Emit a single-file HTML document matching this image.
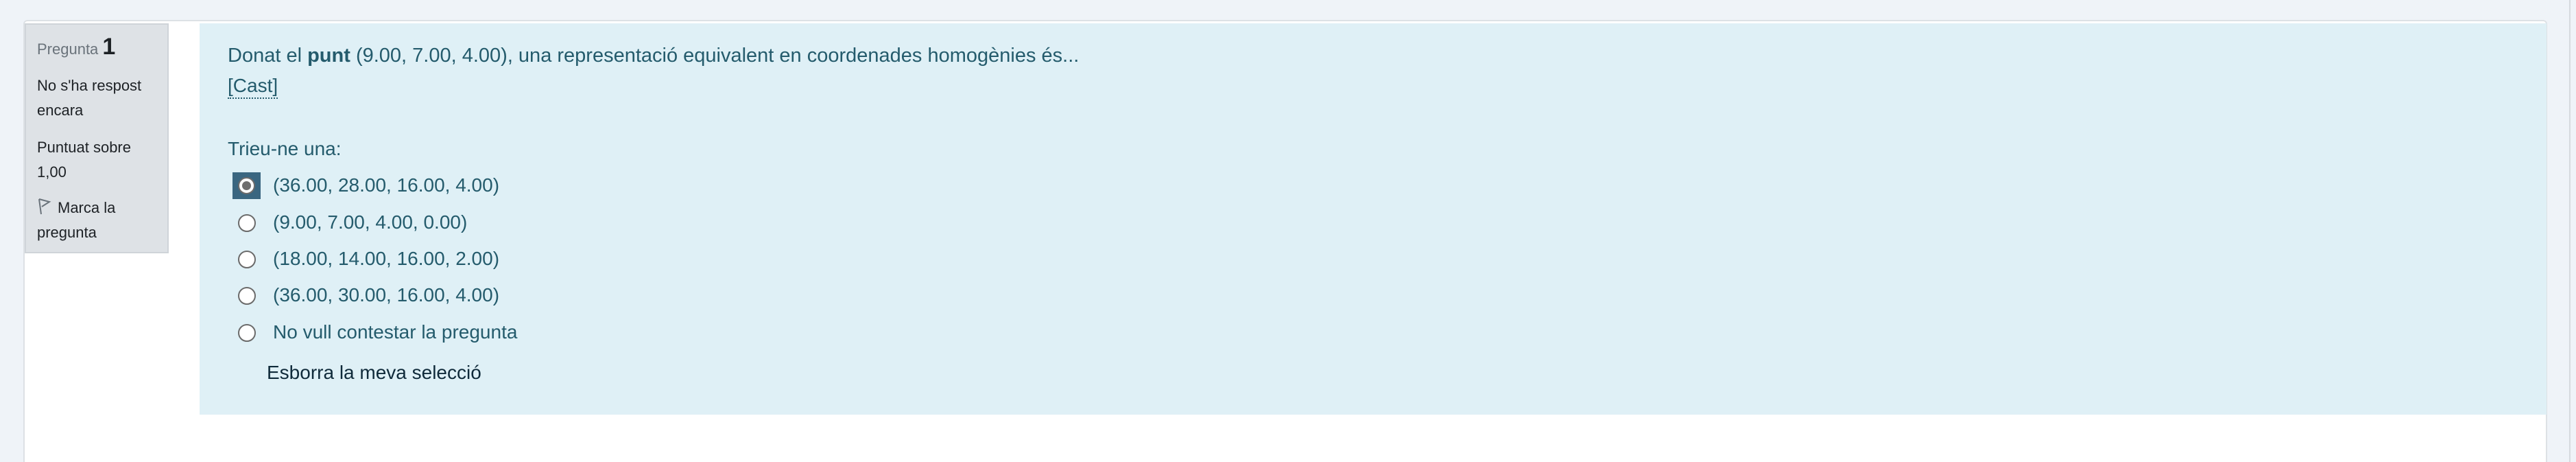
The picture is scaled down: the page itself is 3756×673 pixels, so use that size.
<!DOCTYPE html>
<html><head><meta charset="utf-8"><style>
html,body{margin:0;padding:0;width:3756px;height:673px;overflow:hidden;background:#eff3f8;font-family:"Liberation Sans",sans-serif;}
.card{position:absolute;left:34px;top:29px;width:3680px;height:644px;background:#fff;border:2px solid #dde1e5;border-bottom:none;border-radius:6px 6px 0 0;box-sizing:border-box;}
.info{position:absolute;left:36px;top:34px;width:210px;height:335px;background:#dee2e6;border:2px solid #cfd4d9;box-sizing:border-box;color:#1d2125;font-size:22px;}
.info div{position:absolute;left:16px;line-height:36px;white-space:nowrap;}
.content{position:absolute;left:291px;top:34px;width:3422px;height:570px;background:#dff0f6;color:#245b6c;font-size:28px;}
.t{position:absolute;white-space:nowrap;line-height:34px;}
.r{position:absolute;left:56px;width:22px;height:22px;border:2px solid #6b6b6b;border-radius:50%;background:#fff;}
.sel{position:absolute;left:48px;top:217px;width:41px;height:39px;background:#3a6680;}
.sel .in{position:absolute;left:8px;top:7px;width:21px;height:21px;border:2px solid #6b6b6b;border-radius:50%;background:#fff;}
.sel .in:after{content:"";position:absolute;left:4px;top:4px;width:13px;height:13px;border-radius:50%;background:#6f6f6f;}
.scroll{position:absolute;left:3746px;top:0;width:2px;height:673px;background:#d6dade;}
</style></head><body>
<div class="card"></div>
<div class="info">
 <div style="top:14px;color:#6a737b;font-size:22px;">Pregunta <b style="color:#1d2125;font-size:34px;">1</b></div>
 <div style="top:71px;">No s'ha respost</div>
 <div style="top:107px;">encara</div>
 <div style="top:161px;">Puntuat sobre</div>
 <div style="top:197px;">1,00</div>
 <div style="top:249px;"><svg width="22" height="26" viewBox="0 0 22 26" style="vertical-align:-4px;margin-right:8px"><path d="M3 2 L6 24 M3 2 L18 6 L7 13" fill="none" stroke="#6a737b" stroke-width="2"/></svg>Marca la</div>
 <div style="top:285px;">pregunta</div>
</div>
<div class="content">
 <div class="t" style="left:41px;top:30px;font-size:29px;">Donat el <b>punt</b> (9.00, 7.00, 4.00), una representació equivalent en coordenades homogènies és...</div>
 <div class="t" style="left:41px;top:74px;border-bottom:2px dotted #245b6c;line-height:34px;">[Cast]</div>
 <div class="t" style="left:41px;top:166px;">Trieu-ne una:</div>
 <div class="sel"><div class="in"></div></div>
 <div class="t" style="left:107px;top:219px;">(36.00, 28.00, 16.00, 4.00)</div>
 <div class="r" style="top:278px;"></div>
 <div class="t" style="left:107px;top:273px;">(9.00, 7.00, 4.00, 0.00)</div>
 <div class="r" style="top:331px;"></div>
 <div class="t" style="left:107px;top:326px;">(18.00, 14.00, 16.00, 2.00)</div>
 <div class="r" style="top:384px;"></div>
 <div class="t" style="left:107px;top:379px;">(36.00, 30.00, 16.00, 4.00)</div>
 <div class="r" style="top:438px;"></div>
 <div class="t" style="left:107px;top:433px;">No vull contestar la pregunta</div>
 <div class="t" style="left:98px;top:492px;color:#0f2a3a;">Esborra la meva selecció</div>
</div>
<div class="scroll"></div>
</body></html>
